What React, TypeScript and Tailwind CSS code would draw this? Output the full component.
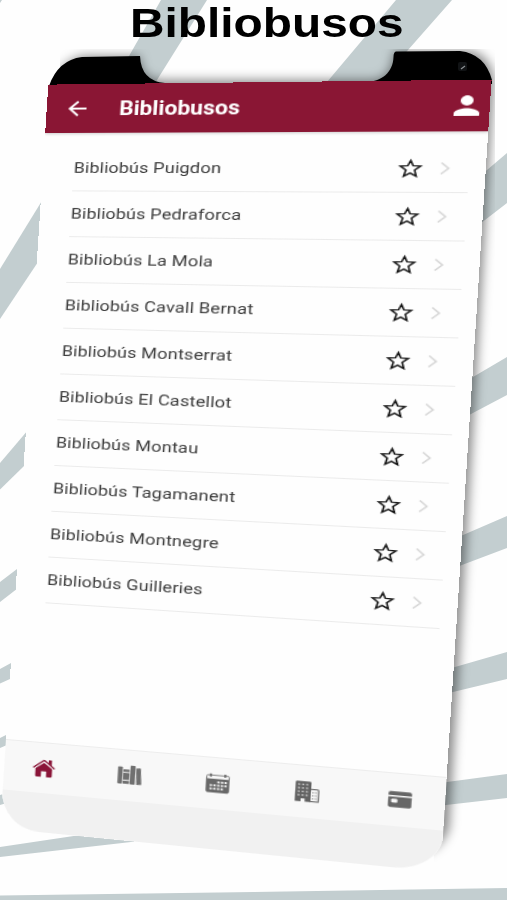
import React from "react";
import { MdArrowBack, MdPerson } from "react-icons/md";

type Point = [number, number];

const SCREEN_W = 368;
const SCREEN_H = 675;

// Projective transform that maps a w*h rectangle onto a quad (tl, tr, br, bl).
function quadTransform(w: number, h: number, q: [Point, Point, Point, Point]) {
  const [[x0, y0], [x1, y1], [x2, y2], [x3, y3]] = q;
  const dx1 = x1 - x2;
  const dx2 = x3 - x2;
  const dx3 = x0 - x1 + x2 - x3;
  const dy1 = y1 - y2;
  const dy2 = y3 - y2;
  const dy3 = y0 - y1 + y2 - y3;
  const det = dx1 * dy2 - dx2 * dy1;
  const g = (dx3 * dy2 - dx2 * dy3) / det;
  const k = (dx1 * dy3 - dx3 * dy1) / det;
  const a = x1 - x0 + g * x1;
  const b = x3 - x0 + k * x3;
  const d = y1 - y0 + g * y1;
  const e = y3 - y0 + k * y3;
  const m = [a / w, d / w, 0, g / w, b / h, e / h, 0, k / h, 0, 0, 1, 0, x0, y0, 0, 1];
  return `matrix3d(${m.map((n) => n.toFixed(9)).join(",")})`;
}

const tilt = quadTransform(SCREEN_W, SCREEN_H, [
  [48.3, 84.6],
  [491.6, 79.6],
  [446.7, 777],
  [6, 739],
]);

const buses = [
  "Bibliobús Puigdon",
  "Bibliobús Pedraforca",
  "Bibliobús La Mola",
  "Bibliobús Cavall Bernat",
  "Bibliobús Montserrat",
  "Bibliobús El Castellot",
  "Bibliobús Montau",
  "Bibliobús Tagamanent",
  "Bibliobús Montnegre",
  "Bibliobús Guilleries",
];

function Backdrop() {
  return (
    <svg className="absolute inset-0" width="507" height="900" viewBox="0 0 507 900">
      <defs>
        <filter id="soft" x="-20%" y="-20%" width="140%" height="140%">
          <feGaussianBlur stdDeviation="5.500" />
        </filter>
        <clipPath id="shadowArea">
          <path d="M60 49H495V440L472 870L434 862L420 400L400 120H60Z" />
        </clipPath>
      </defs>
      <g fill="#c3ced0">
        <path d="M0 0H2L0 3Z" />
        <path d="M161 0H207L157 80L150 92H108L129 56Z" />
        <path d="M396 0H452L408 50L380 82H327Z" />
        <path d="M0 269L40 204L60 172V229L36 265L0 319Z" />
        <path d="M0 463L25.5 433L40 416V450L23 467L0 489.5Z" />
        <path d="M0 582L17 569L30 559V579L15.5 590L0 602Z" />
        <path d="M0 669L11 663L25 655V672L10 679L0 683.5Z" />
        <path d="M0 738L6 735L14 731V742L0 748Z" />
        <path d="M0 795L10 792V802L0 805Z" />
        <path d="M0 847L77 835.500L140 828V841L131 842L0 857Z" />
        <path d="M0 895.500L254 892L507 888V900H0Z" />
        <path d="M507 153L487 170L470 184V231L485 220L507 203Z" />
        <path d="M507 357L473 377L460 385V420L471 414L507 395Z" />
        <path d="M507 516L463 535L450 540V570L462 565L507 548Z" />
        <path d="M507 652L455 667L440 671V695L453 692L507 679Z" />
        <path d="M507 774L447 782L436 784V806L446 805L507 798Z" />
      </g>
      <g clipPath="url(#shadowArea)">
        <path
          d="M53 85Q62 60 84 56H140C140 74 148 80 165 80H370C386 80 392 72 394 51H470Q490 54 494 80L449 828Q442 850 415 856Q200 840 60 820Z"
          fill="#000"
          fillOpacity="0.46"
          filter="url(#soft)"
        />
      </g>
      <path d="M49 86Q58 60 82 57L140 56Q141 81 165 83V87Z" fill="#000" />
      <path d="M365 82C382 82 393 72 393.500 57Q393.500 52 396 51.500L460 51Q485 54 492 80V84H365Z" fill="#000" />
      <rect x="458" y="62" width="9" height="9" rx="2" fill="#111315" />
      <path d="M461 69L465 66" stroke="#8d9295" strokeWidth="1.200" />
    </svg>
  );
}

function StarIcon() {
  return (
    <svg width="21" height="20" viewBox="0 0 21 20" fill="none" stroke="#161616" strokeWidth="1.450">
      <path d="M10.500 2.300L12.600 7.400L18.600 7.900L14 11.800L15.500 17.700L10.500 14.600L5.500 17.700L7 11.800L2.400 7.900L8.400 7.400Z" />
    </svg>
  );
}

function HomeIcon() {
  return (
    <svg width="20" height="19" viewBox="0 0 20 19" fill="#8a1538">
      <path d="M10 4L17.300 10V17.300Q17.300 18.500 16.100 18.500H12.300V12.800H7.700V18.500H3.900Q2.700 18.500 2.700 17.300V10Z" />
      <path d="M.6 9.400L9.300 1.900Q10 1.400 10.700 1.900L19.400 9.400" fill="none" stroke="#8a1538" strokeWidth="1.300" />
      <path d="M14 1H16.700V6.500L14 4.500Z" />
    </svg>
  );
}

function BooksIcon() {
  return (
    <svg width="21" height="20" viewBox="0 0 21 20" fill="#707070">
      <rect x=".3" y="1.800" width="4" height="17.200" rx=".8" />
      <rect x="4.900" y="4.300" width="5.400" height="2.400" rx=".5" />
      <rect x="4.900" y="7.700" width="5.400" height="7" />
      <rect x="4.900" y="15.700" width="5.400" height="3" rx=".5" />
      <rect x="10.900" y="0" width="4.300" height="19" rx=".8" />
      <path d="M15.800 2.400L19 1.900Q19.600 1.900 19.700 2.600L20.900 18.400L16.600 19Z" />
    </svg>
  );
}

function CalendarIcon() {
  const dots = [
    [9.7, 8], [12.7, 8], [15.7, 8],
    [3.5, 11.3], [6.6, 11.3], [9.7, 11.3], [12.7, 11.3], [15.7, 11.3],
    [3.5, 14.6], [6.6, 14.6], [9.7, 14.6], [12.7, 14.6],
  ];
  return (
    <svg width="20" height="20" viewBox="0 0 20 20">
      <path d="M.6 6V3.500Q.6 2.200 1.900 2.200H18.100Q19.400 2.200 19.400 3.500V6" fill="none" stroke="#707070" strokeWidth=".9" />
      <path d="M4 .7V3.700M16 .7V3.700" stroke="#707070" strokeWidth="1.800" />
      <path d="M.2 5.800H19.800V17Q19.800 19.600 17.400 19.600H2.600Q.2 19.600 .2 17Z" fill="#686868" />
      {dots.map(([x, y]) => (
        <rect key={`${x}-${y}`} x={x} y={y} width="1.900" height="2" fill="#efefef" />
      ))}
    </svg>
  );
}

function BuildingIcon() {
  const cols = [2.2, 5.5, 8.8];
  const rows = [2.7, 6.2, 9.7, 13.2];
  return (
    <svg width="20" height="21" viewBox="0 0 20 21">
      <path d="M12.500 7.600H18.200Q19.300 7.600 19.300 8.700V19.700H12.500" fill="#f7f7f7" stroke="#777" strokeWidth="1.200" />
      <path d="M14.100 10.800H15.300M16.500 10.800H17.700M14.100 13.800H15.300M16.500 13.800H17.700M14.100 16.800H15.300M16.500 16.800H17.700" stroke="#999" strokeWidth="1.300" />
      <path d="M.2 1.500Q.2 .2 1.500 .2H11.800Q13 .2 13 1.500V20.300H8.300V17.200H5V20.300H.2Z" fill="#626262" />
      {cols.map((x) =>
        rows.map((y) => <rect key={`${x}-${y}`} x={x} y={y} width="1.700" height="1.500" fill="#c4c4c4" />),
      )}
    </svg>
  );
}

function CardIcon() {
  return (
    <svg width="19" height="16" viewBox="0 0 19 16">
      <path d="M.2 3.900V2Q.2 .2 2 .2H17Q18.800 .2 18.800 2V3.900Z" fill="#666" />
      <path d="M.2 5.500H18.800V13.900Q18.800 15.700 17 15.700H2Q.2 15.700 .2 13.900Z" fill="#666" />
      <rect x="2.600" y="7.600" width="5" height="3.600" rx="1" fill="#f7f7f7" />
    </svg>
  );
}

const tabs = [HomeIcon, BooksIcon, CalendarIcon, BuildingIcon, CardIcon];

function BusRow({ name }: { name: string }) {
  return (
    <li className="flex h-[47.05px] items-center border-b border-[#ebebeb] pr-[15px] text-[#3c3c3c]">
      <span className="flex-1 pt-[2px] pl-[0.3px] text-[15.5px] tracking-[0.12px] whitespace-nowrap">{name}</span>
      <span className="pt-[1px]">
        <StarIcon />
      </span>
      <svg className="ml-[13px]" width="8" height="14" viewBox="0 0 8 14" fill="none" stroke="#d6d6d6" strokeWidth="1.500">
        <path d="M1 1.500L6.800 7L1 12.500" />
      </svg>
    </li>
  );
}

export default function App() {
  return (
    <main className="relative h-[900px] w-[507px] overflow-hidden bg-[#fefefe] font-['Roboto',sans-serif]">
      <Backdrop />
      <h1 className="absolute top-[1px] left-[130px] origin-left scale-x-[1.195] font-['Liberation_Sans',sans-serif] text-[40px] leading-[45px] font-bold text-black">
        Bibliobusos
      </h1>
      <section
        className="absolute top-0 left-0 flex h-[767px] w-[368px] origin-top-left flex-col overflow-hidden rounded-br-[38px_34px] rounded-bl-[34px_38px] bg-[#fefefe]"
        style={{ transform: tilt }}
      >
        <header className="flex h-[49.5px] shrink-0 items-center bg-[#8a1634] pr-[3.5px] pl-[15px] text-white shadow-[0_1px_3px_rgba(0,0,0,0.2)]">
          <MdArrowBack size={24} />
          <span className="ml-[24.5px] flex-1 pt-[1px] text-[19.5px] font-bold">Bibliobusos</span>
          <MdPerson size={30} />
        </header>
        <ul className="flex-1 pt-[13px] pr-[13.5px] pl-[27px]">
          {buses.map((name) => (
            <BusRow key={name} name={name} />
          ))}
        </ul>
        <nav className="-mx-[2px] grid h-[52px] shrink-0 grid-cols-5 place-items-center border-t border-[#ededed] bg-[#f8f8f8] pb-[1px]">
          {tabs.map((Icon, i) => (
            <Icon key={i} />
          ))}
        </nav>
        <div className="h-[40px] shrink-0 bg-[#f1f1f1]" />
      </section>
    </main>
  );
}
